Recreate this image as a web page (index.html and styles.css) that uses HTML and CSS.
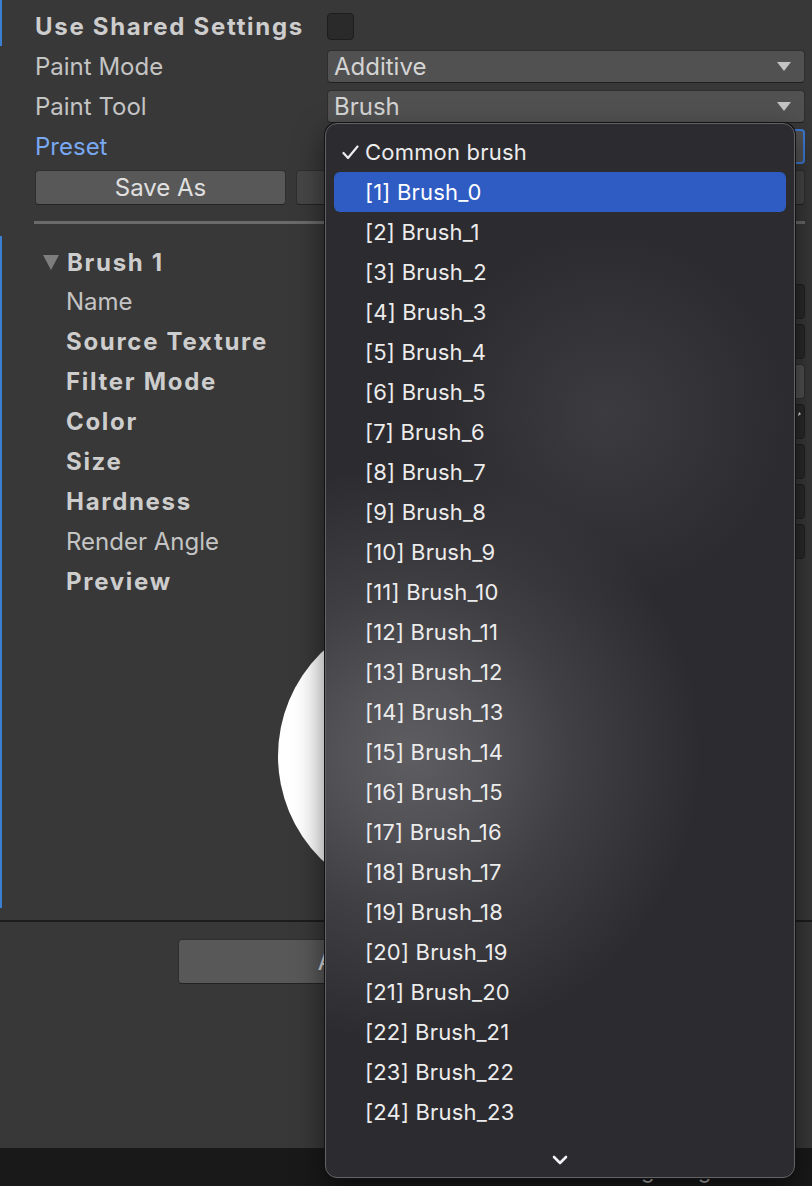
FILE: index.html
```html
<!DOCTYPE html>
<html>
<head>
<meta charset="utf-8">
<link rel="stylesheet" href="styles.css">
</head>
<body>
<div class="window">
  <div class="inspector">
    <div class="row row-first modified">
      <div class="label bold">Use Shared Settings</div>
      <div class="control"><span class="checkbox"></span></div>
    </div>
    <div class="row">
      <div class="label">Paint Mode</div>
      <div class="control"><div class="dropdown"><span>Additive</span><svg class="arrow" width="14" height="9" viewBox="0 0 14 9"><polygon points="0,0 14,0 7,9" fill="#c4c4c4"/></svg></div></div>
    </div>
    <div class="row">
      <div class="label">Paint Tool</div>
      <div class="control"><div class="dropdown"><span>Brush</span><svg class="arrow" width="14" height="9" viewBox="0 0 14 9"><polygon points="0,0 14,0 7,9" fill="#c4c4c4"/></svg></div></div>
    </div>
    <div class="row">
      <div class="label focused">Preset</div>
      <div class="control"><div class="dropdown focus"></div></div>
    </div>
    <div class="button-row">
      <div class="btn save">Save As</div>
      <div class="btn disabled"></div>
    </div>
    <div class="separator"></div>
    <div class="brush-section modified">
      <div class="foldout">
        <svg class="fold-tri" width="16" height="15" viewBox="0 0 16 15"><polygon points="0,0 16,0 8,15" fill="#7d7d7d"/></svg>
        <span class="bold">Brush 1</span>
      </div>
      <div class="row sub"><div class="label sublabel">Name</div><div class="control"><div class="field"></div></div></div>
      <div class="row sub"><div class="label sublabel bold">Source Texture</div><div class="control"><div class="field"></div></div></div>
      <div class="row sub"><div class="label sublabel bold">Filter Mode</div><div class="control"><div class="field popup"></div></div></div>
      <div class="row sub"><div class="label sublabel bold">Color</div><div class="control"><div class="field color"><svg class="dropper" width="10" height="12" viewBox="0 0 10 12"><path d="M7 1 L9 3 L6 5 Z" fill="#e8e8e8"/></svg></div></div></div>
      <div class="row sub"><div class="label sublabel bold">Size</div><div class="control"><div class="field"></div></div></div>
      <div class="row sub"><div class="label sublabel bold">Hardness</div><div class="control"><div class="field"></div></div></div>
      <div class="row sub"><div class="label sublabel">Render Angle</div><div class="control"><div class="field"></div></div></div>
      <div class="row sub"><div class="label sublabel bold">Preview</div></div>
      <div class="preview"><div class="circle"></div></div>
    </div>
  </div>
  <div class="footer">
    <div class="btn big">Add New Brush</div>
  </div>
  <div class="statusbar"><span class="status">Loading image</span></div>

  <div class="menu">
    <div class="item"><span class="check"><svg width="17" height="15" viewBox="0 0 17 15"><polyline points="1.5,8 6,13 15.5,1.5" fill="none" stroke="#ececec" stroke-width="2.2" stroke-linecap="round" stroke-linejoin="round"/></svg></span>Common brush</div>
    <div class="item active"><span class="check"></span>[1] Brush_0</div>
    <div class="item"><span class="check"></span>[2] Brush_1</div>
    <div class="item"><span class="check"></span>[3] Brush_2</div>
    <div class="item"><span class="check"></span>[4] Brush_3</div>
    <div class="item"><span class="check"></span>[5] Brush_4</div>
    <div class="item"><span class="check"></span>[6] Brush_5</div>
    <div class="item"><span class="check"></span>[7] Brush_6</div>
    <div class="item"><span class="check"></span>[8] Brush_7</div>
    <div class="item"><span class="check"></span>[9] Brush_8</div>
    <div class="item"><span class="check"></span>[10] Brush_9</div>
    <div class="item"><span class="check"></span>[11] Brush_10</div>
    <div class="item"><span class="check"></span>[12] Brush_11</div>
    <div class="item"><span class="check"></span>[13] Brush_12</div>
    <div class="item"><span class="check"></span>[14] Brush_13</div>
    <div class="item"><span class="check"></span>[15] Brush_14</div>
    <div class="item"><span class="check"></span>[16] Brush_15</div>
    <div class="item"><span class="check"></span>[17] Brush_16</div>
    <div class="item"><span class="check"></span>[18] Brush_17</div>
    <div class="item"><span class="check"></span>[19] Brush_18</div>
    <div class="item"><span class="check"></span>[20] Brush_19</div>
    <div class="item"><span class="check"></span>[21] Brush_20</div>
    <div class="item"><span class="check"></span>[22] Brush_21</div>
    <div class="item"><span class="check"></span>[23] Brush_22</div>
    <div class="item"><span class="check"></span>[24] Brush_23</div>
    <div class="more"><svg width="16" height="10" viewBox="0 0 16 10"><polyline points="2,2 8,8 14,2" fill="none" stroke="#f2f2f2" stroke-width="2.6" stroke-linecap="round" stroke-linejoin="round"/></svg></div>
  </div>
</div>
</body>
</html>
```

FILE: styles.css
```css
* { box-sizing: border-box; margin: 0; padding: 0; }
html, body { width: 812px; height: 1186px; overflow: hidden; }
body {
  background: #383838;
  font-family: Inter, "Noto Sans", sans-serif;
  font-size: 24px;
  color: #c4c4c4;
}
.window {
  position: relative;
  width: 812px;
  height: 1186px;
  display: flex;
  flex-direction: column;
}
.inspector { height: 920px; flex: none; }
.row {
  display: flex;
  align-items: center;
  height: 40px;
  padding: 0 7px 0 35px;
}
.row-first { height: 46px; padding-top: 6px; }
.modified { box-shadow: inset 2px 0 0 #3a7fd0; }
.label { width: 292px; flex: none; white-space: nowrap; }
.bold { font-weight: 700; color: #cdcdcd; letter-spacing: 1.7px; }
.focused { color: #79a8f2; }
.control { flex: 1; display: flex; align-items: center; min-width: 0; }
.checkbox {
  width: 27px; height: 27px;
  background: #2a2a2a;
  border: 1px solid #1d1d1d;
  border-radius: 4px;
}
.dropdown {
  flex: 1;
  height: 33px;
  background: #515151;
  border: 1px solid #2e2e2e;
  border-bottom-color: #202020;
  border-radius: 4px;
  display: flex;
  align-items: center;
  justify-content: space-between;
  padding: 0 13px 0 6px;
  color: #d4d4d4;
}
.dropdown.focus { height: 35px; border: 2px solid #3b79d4; }
.button-row {
  display: flex;
  gap: 10px;
  margin-top: 4px;
  padding: 0 7px 0 35px;
  height: 35px;
}
.btn {
  height: 35px;
  background: #585858;
  border: 1px solid #2f2f2f;
  border-bottom-color: #232323;
  border-radius: 4px;
  color: #e0e0e0;
  display: flex;
  align-items: center;
  justify-content: center;
}
.btn.save { width: 251px; flex: none; }
.btn.disabled { flex: 1; background: #464646; }
.separator {
  height: 3px;
  margin: 16px 7px 12px 34px;
  background: #6a6a6a;
}
.brush-section { height: 672px; padding-top: 7px; }
.foldout {
  display: flex;
  align-items: center;
  height: 38px;
  padding-left: 43px;
}
.fold-tri { margin-right: 8px; }
.row.sub { padding-left: 66px; }
.sublabel { width: 261px; }
.field {
  flex: 1;
  height: 35px;
  background: #2a2a2a;
  border: 1px solid #1f1f1f;
  border-radius: 4px;
  display: flex;
  align-items: flex-start;
  justify-content: flex-end;
}
.field.popup { background: #515151; border-color: #2e2e2e; }
.dropper { margin: 6px 2px 0 0; }
.preview {
  height: 300px;
  padding: 10px 7px 0 41px;
  display: flex;
  justify-content: center;
}
.circle {
  width: 290px;
  height: 290px;
  border-radius: 50%;
  background: radial-gradient(circle, #ffffff 0%, #ffffff 88%, #ececec 97%, #d8d8d8 100%);
}
.footer {
  flex: none;
  height: 228px;
  border-top: 2px solid #1c1c1c;
  padding-top: 17px;
}
.btn.big {
  width: 456px;
  height: 45px;
  margin: 0 auto;
}
.statusbar {
  flex: 1;
  background: #191919;
  color: #bdbdbd;
  font-size: 22px;
  padding: 9px 0 0 571px;
}

/* popup menu */
.menu {
  position: absolute;
  left: 325px;
  top: 123px;
  width: 470px;
  height: 1055px;
  border: 1px solid #626166;
  border-radius: 12px;
  box-shadow: 0 0 0 1px #121212, 0 12px 30px rgba(0, 0, 0, 0.55);
  padding: 8px 8px 0 8px;
  font-size: 22px;
  letter-spacing: 0.2px;
  color: #ececec;
  background:
    radial-gradient(circle 290px at 86px 630px, #5e5d62 0%, #535257 25%, #403f44 55%, rgba(45, 44, 49, 0) 100%),
    radial-gradient(circle 180px at 280px 290px, rgba(64, 63, 68, 0.8) 0%, rgba(45, 44, 49, 0) 100%),
    #2c2b30;
}
.item {
  height: 40px;
  display: flex;
  align-items: center;
  border-radius: 6px;
  white-space: nowrap;
}
.item.active { background: #2f5cc3; color: #ffffff; }
.check {
  width: 31px;
  flex: none;
  display: flex;
  align-items: center;
  padding-left: 8px;
}
.more {
  height: 46px;
  padding-top: 10px;
  display: flex;
  align-items: center;
  justify-content: center;
}
```
